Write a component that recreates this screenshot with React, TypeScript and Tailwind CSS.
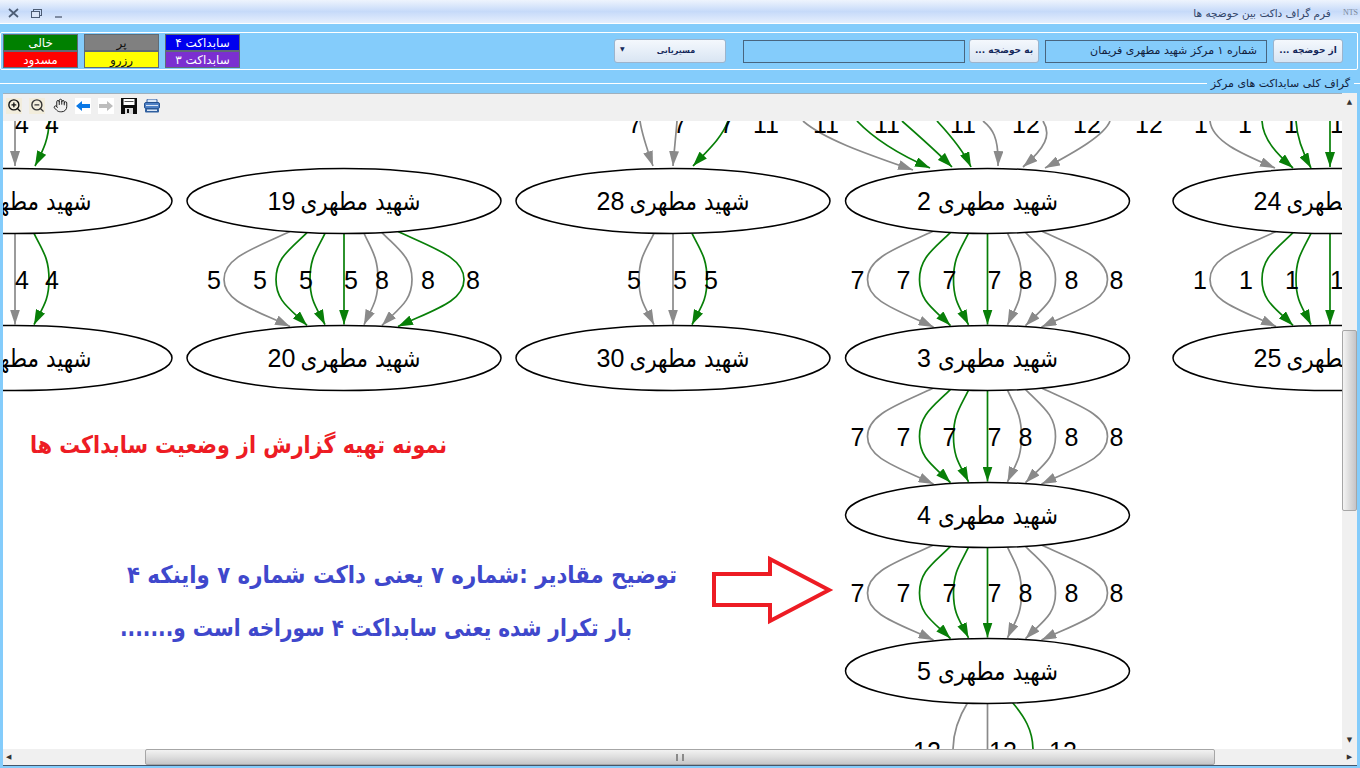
import React from 'react';
import { Hand, ZoomIn, ZoomOut } from 'lucide-react';

const GREEN = '#087f08';
const GRAY = '#8a8a8a';
const RX_WIDE = 157;
const RX_NARROW = 142;
const RY = 32.5;
const NAME = 'شهید مطهری';

type Edge = { start: number; mid: number; color: string; label: string; labelX: number };

const sevenOffsets = [
    [-54, -120, -130],
    [-37, -68, -84],
    [-19, -34, -38],
    [0, 0, 7],
    [20, 34, 38],
    [38, 68, 84],
    [54, 120, 129],
];

function seven(colors: string[], labels: string[]): Edge[] {
    return sevenOffsets.map((o, i) => ({ start: o[0], mid: o[1], labelX: o[2], color: colors[i], label: labels[i] }));
}

const colNodes: { cx: number; rx: number; rows: [string, number][] }[] = [
    { cx: 15, rx: RX_WIDE, rows: [['', 201], ['', 358]] },
    { cx: 344, rx: RX_WIDE, rows: [['19', 201], ['20', 358]] },
    { cx: 673, rx: RX_WIDE, rows: [['28', 201], ['30', 358]] },
    { cx: 987.5, rx: RX_NARROW, rows: [['2', 201], ['3', 358], ['4', 515], ['5', 671]] },
    { cx: 1330, rx: RX_WIDE, rows: [['24', 201], ['25', 358]] },
];

const ductColors = [GRAY, GREEN, GREEN, GREEN, GRAY, GRAY, GRAY];
const ductLabels = ['7', '7', '7', '7', '8', '8', '8'];

const bundles: { cx: number; rx: number; top: number; bottom: number; edges: Edge[] }[] = [
    {
        cx: 15, rx: RX_WIDE, top: 201, bottom: 358,
        edges: [
            { start: 0, mid: 0, color: GRAY, label: '4', labelX: 7 },
            { start: 19, mid: 34, color: GREEN, label: '4', labelX: 37 },
        ],
    },
    { cx: 344, rx: RX_WIDE, top: 201, bottom: 358, edges: seven([GRAY, GREEN, GREEN, GREEN, GRAY, GRAY, GREEN], ['5', '5', '5', '5', '8', '8', '8']) },
    {
        cx: 673, rx: RX_WIDE, top: 201, bottom: 358,
        edges: [
            { start: -19, mid: -34, color: GRAY, label: '5', labelX: -39 },
            { start: 0, mid: 0, color: GRAY, label: '5', labelX: 7 },
            { start: 19, mid: 34, color: GREEN, label: '5', labelX: 38 },
        ],
    },
    { cx: 987.5, rx: RX_NARROW, top: 201, bottom: 358, edges: seven(ductColors, ductLabels) },
    { cx: 987.5, rx: RX_NARROW, top: 358, bottom: 515, edges: seven(ductColors, ductLabels) },
    { cx: 987.5, rx: RX_NARROW, top: 515, bottom: 671, edges: seven(ductColors, ductLabels) },
    { cx: 1330, rx: RX_WIDE, top: 201, bottom: 358, edges: seven(ductColors, ['1', '1', '1', '1', '1', '1', '1']) },
];

// arrows that come into the first row from nodes above the visible area
const incoming: [string, string][] = [
    ['M15 121 L15 166', GRAY],
    ['M49 121 C49 140 42 152 35 166', GREEN],
    ['M640 121 C642 135 648 152 653 166', GRAY],
    ['M677 121 C676 135 674 152 673 166', GRAY],
    ['M728 121 C722 138 706 152 693 166', GREEN],
    ['M803 121 C825 140 870 155 913 170', GRAY],
    ['M857 121 C875 140 900 155 930 168', GREEN],
    ['M902 121 C918 135 937 152 952 167', GREEN],
    ['M937 121 C950 135 963 150 971 167', GREEN],
    ['M983 121 C992 128 999 137 998 166', GRAY],
    ['M1043 121 C1052 135 1045 148 1023 167', GRAY],
    ['M1110 121 C1105 135 1075 152 1045 168', GRAY],
    ['M1210 121 C1212 142 1245 155 1275 168', GRAY],
    ['M1262 121 C1263 140 1278 155 1293 168', GREEN],
    ['M1296 121 C1297 140 1304 155 1311 168', GREEN],
    ['M1330 121 L1330 167', GREEN],
];

const topLabels: [number, string][] = [
    [22, '4'], [52, '4'], [635, '7'], [680, '7'], [727, '7'], [766, '11'], [826, '11'], [887, '11'], [963, '11'],
    [1026, '12'], [1087, '12'], [1149, '12'], [1201, '1'], [1245, '1'], [1291, '1'], [1337, '1'],
];

function edgeY(dx: number, rx: number) {
    return RY * Math.sqrt(1 - (dx * dx) / (rx * rx));
}

function edgePath(e: Edge, cx: number, rx: number, top: number, bottom: number) {
    const x = cx + e.start;
    const m = cx + e.mid;
    const y0 = top + edgeY(e.start, rx);
    const y1 = bottom - edgeY(e.start, rx) - 1;
    const ym = (top + bottom) / 2;
    if (e.mid === 0) return `M${x} ${y0} L${x} ${y1}`;
    const c = x + (m - x) * 0.55;
    return `M${x} ${y0} C${c} ${y0 + 17} ${m} ${ym - 22} ${m} ${ym} C${m} ${ym + 22} ${c} ${y1 - 17} ${x} ${y1}`;
}

function NodeLabel({ cx, cy, num }: { cx: number; cy: number; num: string }) {
    // the number keeps Arial widths, the Persian name is squeezed to the width it has in the report
    const width = num === '' || num.length === 2 ? 153 : 141;
    const right = cx + width / 2;
    const left = cx - width / 2;
    return (
        <>
            <text x={right} y={cy + 9} direction="rtl" textLength="120" lengthAdjust="spacingAndGlyphs" className="text-[25px] fill-black [font-family:'DejaVu_Sans',sans-serif]">
                {NAME}
            </text>
            {num !== '' && (
                <text x={left} y={cy + 9} className="text-[25px] fill-black [font-family:'Liberation_Sans',sans-serif]">
                    {num}
                </text>
            )}
        </>
    );
}

function Graph() {
    return (
        <svg viewBox="3 121 1339 629" width="1339" height="629" className="block">
            <defs>
                <marker id="arrow-gray" markerUnits="userSpaceOnUse" markerWidth="16" markerHeight="10" refX="15" refY="5" orient="auto">
                    <path d="M0 0 L15 5 L0 10 Z" fill={GRAY} />
                </marker>
                <marker id="arrow-green" markerUnits="userSpaceOnUse" markerWidth="16" markerHeight="10" refX="15" refY="5" orient="auto">
                    <path d="M0 0 L15 5 L0 10 Z" fill={GREEN} />
                </marker>
            </defs>

            {incoming.map(([d, color], i) => (
                <path key={i} d={d} fill="none" stroke={color} strokeWidth="1.7" markerEnd={`url(#arrow-${color === GREEN ? 'green' : 'gray'})`} />
            ))}
            {topLabels.map(([x, t], i) => (
                <text key={i} x={x} y={133} textAnchor="middle" className="text-[25px] fill-black [font-family:'Liberation_Sans',sans-serif]">{t}</text>
            ))}

            {bundles.map((b, i) =>
                b.edges.map((e, j) => (
                    <g key={`${i}-${j}`}>
                        <path
                            d={edgePath(e, b.cx, b.rx, b.top, b.bottom)}
                            fill="none"
                            stroke={e.color}
                            strokeWidth="1.7"
                            markerEnd={`url(#arrow-${e.color === GREEN ? 'green' : 'gray'})`}
                        />
                        <text
                            x={b.cx + e.labelX}
                            y={(b.top + b.bottom) / 2 + 9}
                            textAnchor="middle"
                            className="text-[25px] fill-black [font-family:'Liberation_Sans',sans-serif]"
                        >
                            {e.label}
                        </text>
                    </g>
                ))
            )}

            {/* edges leaving the last node */}
            <path d="M968 702 C958 718 953 732 953 750" fill="none" stroke={GRAY} strokeWidth="1.7" />
            <path d="M987.5 703 L987.5 750" fill="none" stroke={GRAY} strokeWidth="1.7" />
            <path d="M1012 702 C1024 716 1033 730 1033 750" fill="none" stroke={GREEN} strokeWidth="1.7" />
            <text x="927" y="760" textAnchor="middle" className="text-[25px] fill-black [font-family:'Liberation_Sans',sans-serif]">12</text>
            <text x="1003" y="760" textAnchor="middle" className="text-[25px] fill-black [font-family:'Liberation_Sans',sans-serif]">12</text>
            <text x="1063" y="760" textAnchor="middle" className="text-[25px] fill-black [font-family:'Liberation_Sans',sans-serif]">12</text>

            {colNodes.map(col =>
                col.rows.map(([num, cy]) => (
                    <g key={`${col.cx}-${cy}`}>
                        <ellipse cx={col.cx} cy={cy} rx={col.rx} ry={RY} fill="#fff" stroke="#000" strokeWidth="1.5" />
                        <NodeLabel cx={col.cx} cy={cy} num={num} />
                    </g>
                ))
            )}

            {/* annotation drawn over the report */}
            <text x="447" y="453" direction="rtl" textLength="417" lengthAdjust="spacingAndGlyphs" className="text-[24px] font-bold fill-[#ed1c24] [font-family:'DejaVu_Sans',sans-serif]">
                نمونه تهیه گزارش از وضعیت سابداکت ها
            </text>
            <text x="677" y="583" direction="rtl" textLength="550" lengthAdjust="spacingAndGlyphs" className="text-[24px] font-bold fill-[#3f48cc] [font-family:'DejaVu_Sans',sans-serif]">
                توضیح مقادیر :شماره ۷ یعنی داکت شماره ۷ واینکه ۴
            </text>
            <text x="632" y="636" direction="rtl" textLength="512" lengthAdjust="spacingAndGlyphs" className="text-[24px] font-bold fill-[#3f48cc] [font-family:'DejaVu_Sans',sans-serif]">
                بار تکرار شده یعنی سابداکت ۴ سوراخه است و.......
            </text>
            <path d="M714 574 L770 574 L770 559 L829 590 L770 621 L770 605 L714 605 Z" fill="#fff" stroke="#ed1c24" strokeWidth="4" />
        </svg>
    );
}

function ToolIcon({ children, className = '' }: { children: React.ReactNode; className?: string }) {
    return <div className={`w-[16px] h-[16px] flex items-center justify-center ${className}`}>{children}</div>;
}

function Toolbar() {
    return (
        <div className="h-[28px] bg-[#f0f0f0] flex items-center gap-[7px] pl-[3px] pb-[4px] border-t border-[#9fb0bd]">
            <ToolIcon className="bg-[#f2eddc]"><ZoomIn size={15} strokeWidth={2.2} color="#111" /></ToolIcon>
            <ToolIcon className="bg-[#f2eddc]"><ZoomOut size={15} strokeWidth={2.2} color="#333" /></ToolIcon>
            <ToolIcon><Hand size={15} strokeWidth={1.6} color="#222" /></ToolIcon>
            <ToolIcon className="bg-white">
                <svg width="14" height="12" viewBox="0 0 14 12"><path d="M0 6 L6 1 V4 H14 V8 H6 V11 Z" fill="#0a78e6" /></svg>
            </ToolIcon>
            <ToolIcon className="bg-white">
                <svg width="14" height="12" viewBox="0 0 14 12"><path d="M14 6 L8 1 V4 H0 V8 H8 V11 Z" fill="#bdbdbd" /></svg>
            </ToolIcon>
            <ToolIcon>
                <svg width="16" height="16" viewBox="0 0 16 16">
                    <path d="M0 0 H16 V16 H0 Z" fill="#0c0c0c" />
                    <rect x="2.5" y="1" width="11" height="6" fill="#fff" />
                    <rect x="3.5" y="3" width="9" height="1" fill="#555" />
                    <rect x="4" y="10" width="8" height="6" fill="#ddd" />
                    <rect x="6" y="11" width="2" height="4" fill="#111" />
                </svg>
            </ToolIcon>
            <ToolIcon>
                <svg width="16" height="14" viewBox="0 0 16 14">
                    <rect x="3" y="0" width="10" height="4" rx="1" fill="#dbe7f6" stroke="#2c5aa0" />
                    <rect x="0.5" y="3.5" width="15" height="6" rx="1.5" fill="#4d7fc4" stroke="#23508f" />
                    <rect x="2" y="6" width="12" height="1" fill="#dbe7f6" />
                    <rect x="1" y="9.5" width="14" height="4" rx="1" fill="#2f5f9f" />
                    <rect x="3" y="10.5" width="10" height="1.5" fill="#dbe7f6" />
                </svg>
            </ToolIcon>
        </div>
    );
}

function VerticalScrollbar() {
    return (
        <div className="w-[15px] bg-[#f0f0f0] flex flex-col items-center shrink-0">
            <div className="h-[18px] flex items-center justify-center text-[7px] leading-none text-[#333]">▲</div>
            <div className="h-[219px]" />
            <div className="w-[15px] h-[181px] border border-[#a6a6a6] rounded-[2px] bg-gradient-to-r from-[#f4f4f4] via-[#dcdcdc] to-[#c4c4c8]" />
            <div className="flex-1" />
            <div className="h-[18px] flex items-center justify-center text-[7px] leading-none text-[#333]">▼</div>
        </div>
    );
}

function HorizontalScrollbar() {
    return (
        <div className="h-[16px] bg-[#f0f0f0] flex items-center shrink-0">
            <div className="w-[142px] pl-[3px] text-[7px] leading-none text-[#333]">◀</div>
            <div className="w-[1070px] h-[16px] border border-[#a6a6a6] rounded-[2px] bg-gradient-to-b from-[#f2f2f2] via-[#dedede] to-[#c6c6c8] flex items-center justify-center">
                <div className="w-[8px] h-[7px] border-x-2 border-[#8a8a8a]" />
            </div>
            <div className="flex-1" />
            <div className="w-[15px] text-center text-[7px] leading-none text-[#333]">▶</div>
        </div>
    );
}

function LegendCell({ label, className }: { label: string; className: string }) {
    return <div className={`w-[75px] h-[17px] flex items-center justify-center text-[12px] leading-none border border-[#5f6b75] ${className}`}>{label}</div>;
}

function PanelButton({ label, className = '' }: { label: string; className?: string }) {
    return (
        <button className={`h-[24px] rounded-[3px] border border-[#9cb4cc] bg-gradient-to-b from-[#f4f8fd] to-[#d9e5f3] text-[9px] font-bold text-[#15285a] ${className}`} dir="rtl">
            {label}
        </button>
    );
}

function ValueBox({ label, className }: { label?: string; className: string }) {
    return (
        <div className={`h-[23px] border border-[#48657f] bg-[#84ccfb] flex items-center justify-start pr-[9px] text-[11px] text-[#10203c] ${className}`} dir="rtl">
            {label}
        </div>
    );
}

export default function App() {
    return (
        <div className="w-[1360px] h-[768px] overflow-hidden bg-[#84ccfb] flex flex-col [font-family:'DejaVu_Sans','Liberation_Sans',sans-serif]">
            {/* title bar */}
            <div className="h-[24px] shrink-0 border-b border-white bg-gradient-to-b from-[#eef4fd] via-[#c6daf9] to-[#e6effd] flex items-center justify-between pt-[3px] pl-[8px] pr-[2px]">
                <div className="flex items-center gap-[12px] text-[#4c5c74]">
                    <svg width="11" height="10" viewBox="0 0 11 10"><path d="M1 1 L10 9 M10 1 L1 9" stroke="#4c5c74" strokeWidth="1.7" /></svg>
                    <svg width="11" height="9" viewBox="0 0 11 9"><rect x="2.5" y="0.5" width="8" height="6" fill="none" stroke="#4c5c74" /><rect x="0.5" y="2.5" width="8" height="6" fill="#dbe6f8" stroke="#4c5c74" /></svg>
                    <div className="w-[7px] h-[2px] mt-[7px] ml-[1px] bg-[#7f8ca2]" />
                </div>
                <div className="flex items-center gap-[12px]">
                    <span className="text-[10.5px] leading-none text-[#33476b]" dir="rtl">فرم گراف داکت بین حوضچه ها</span>
                    <span className="text-[8px] leading-none text-[#7a8798] [font-family:'Liberation_Serif',serif]">NTS</span>
                </div>
            </div>

            {/* filter panel */}
            <div className="mt-[8px] h-[38px] shrink-0 border-y border-white border-r border-l rounded-[2px] mr-[2px] flex items-center justify-between pl-[2px] pr-[14px]">
                <div className="flex gap-[6px]">
                    <div className="flex flex-col">
                        <LegendCell label="خالی" className="bg-[#008000] text-white" />
                        <LegendCell label="مسدود" className="bg-[#ff0000] text-white" />
                    </div>
                    <div className="flex flex-col">
                        <LegendCell label="پر" className="bg-[#808080] text-[#111]" />
                        <LegendCell label="رزرو" className="bg-[#ffff00] text-[#111]" />
                    </div>
                    <div className="flex flex-col">
                        <LegendCell label="سابداکت ۴" className="bg-[#0000ee] text-white" />
                        <LegendCell label="سابداکت ۳" className="bg-[#7b2fd0] text-white" />
                    </div>
                </div>
                <div className="flex items-center">
                    <button className="relative w-[112px] h-[24px] mr-[17px] pl-[12px] rounded-[3px] border border-[#9cb4cc] bg-gradient-to-b from-[#f4f8fd] to-[#d9e5f3] text-[8px] font-bold text-[#15285a]">
                        <span className="absolute left-[5px] top-[4px] text-[6px] text-[#15285a]">▼</span>
                        مسیریابی
                    </button>
                    <ValueBox className="w-[222px] mr-[4px]" />
                    <PanelButton label="به حوضچه ..." className="w-[70px] mr-[6px]" />
                    <ValueBox label="شماره ۱ مرکز شهید مطهری فریمان" className="w-[222px] mr-[6px]" />
                    <PanelButton label="از حوضچه ..." className="w-[70px]" />
                </div>
            </div>

            {/* group box around the graph */}
            <div className="relative mt-[13px] flex-1 min-h-0 border-t border-white pt-[9px] pl-[3px] pr-[3px] pb-[2px]">
                <span className="absolute right-[6px] top-[-8px] bg-[#84ccfb] px-[4px] text-[11px] leading-[15px] text-[#10203c]" dir="rtl">گراف کلی سابداکت های مرکز</span>
                <div className="h-full flex flex-col border-b border-[#44566a]">
                    <div className="flex-1 min-h-0 flex">
                        <div className="w-[1339px] flex flex-col shrink-0">
                            <Toolbar />
                            <div className="flex-1 min-h-0 overflow-hidden bg-white">
                                <Graph />
                            </div>
                        </div>
                        <VerticalScrollbar />
                    </div>
                    <HorizontalScrollbar />
                </div>
            </div>
        </div>
    );
}
